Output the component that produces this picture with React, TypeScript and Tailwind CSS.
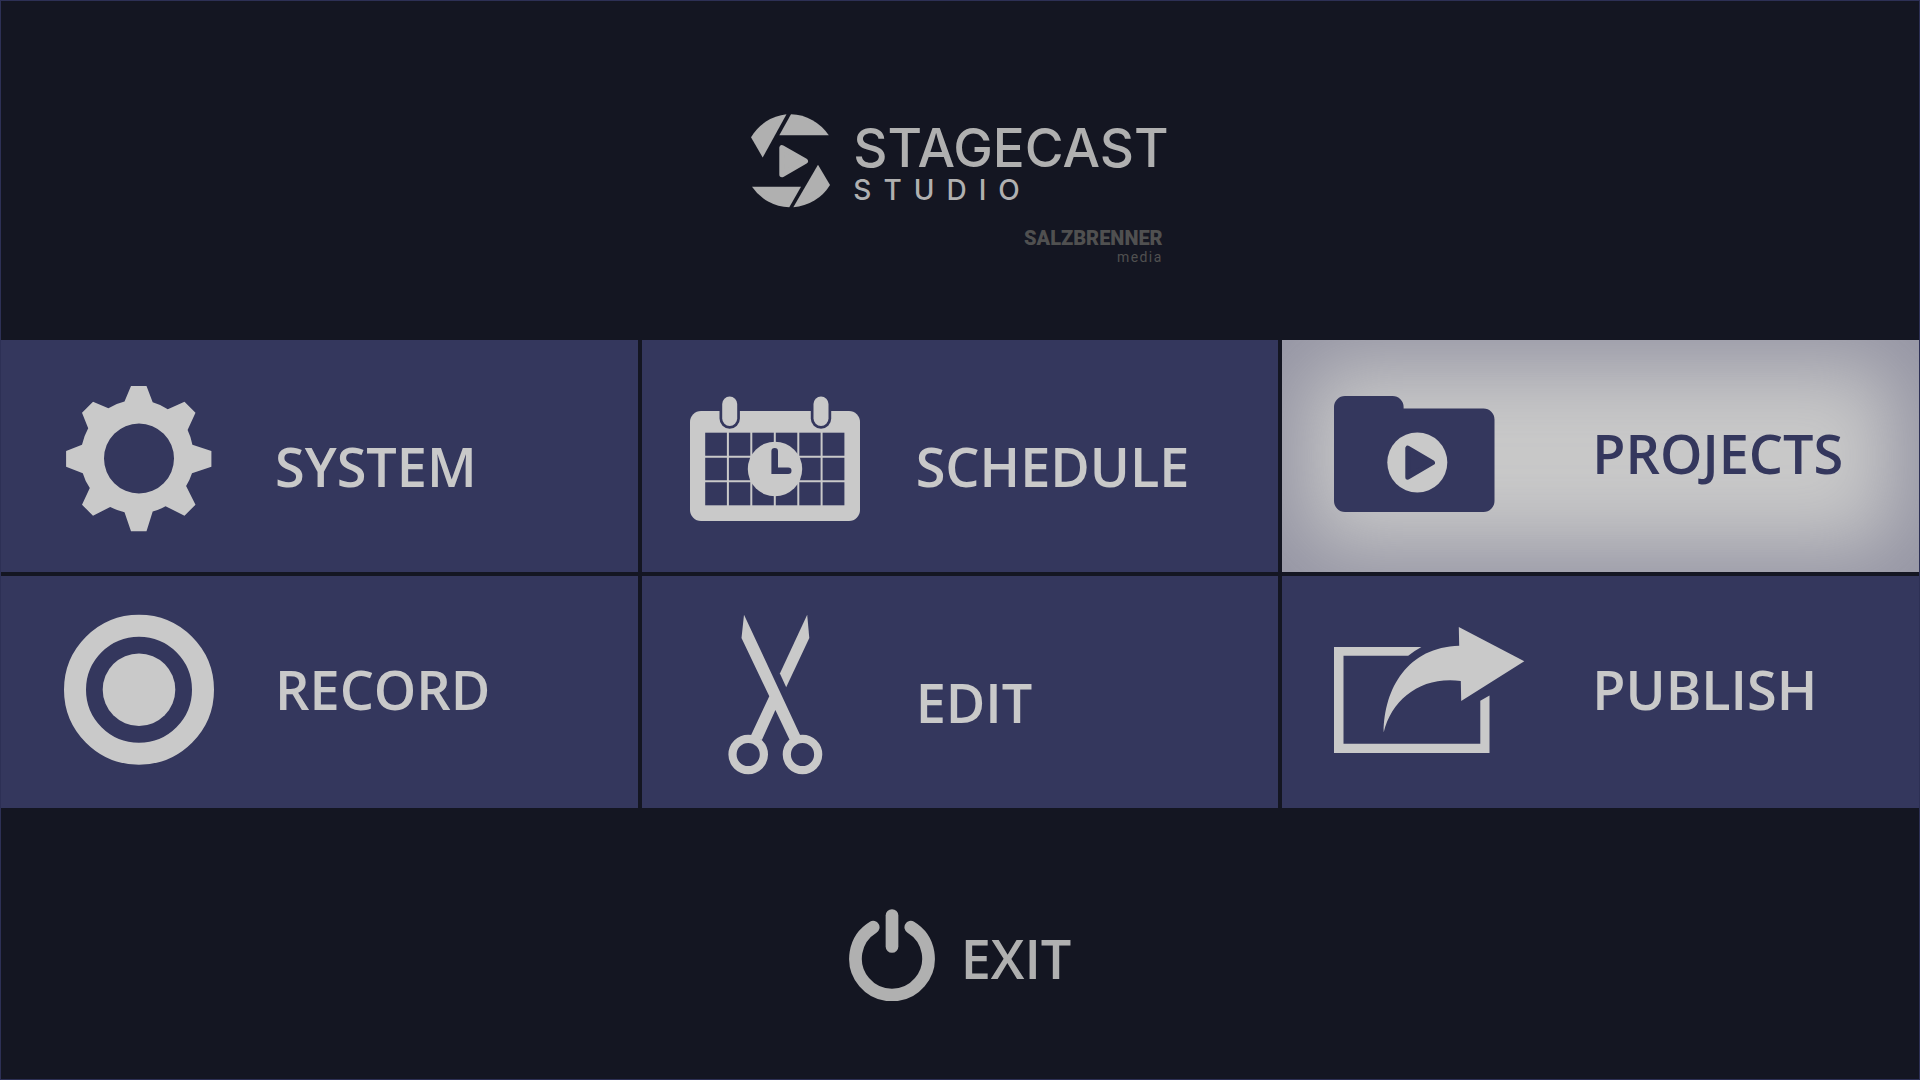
import type { ReactNode } from "react";

function StagecastLogo() {
  return (
    <svg viewBox="0 0 80 96" className="h-24 w-20 fill-current" aria-hidden="true">
      <path d="M35.5 1.3A46.7 46.7 0 0 0 0 24.3L11.7 44.5Z" />
      <path d="M40 1.3A46.7 46.7 0 0 1 77.8 22.3H28.3Z" />
      <path d="M1 73.7H50L38.3 94.3A46.7 46.7 0 0 1 1 73.7Z" />
      <path d="M67 51.7L79 72A46.7 46.7 0 0 1 42.3 94.3Z" />
      <path d="M31 34.8V61.6L54.3 48.2Z" stroke="currentColor" strokeWidth="5.4" strokeLinejoin="round" />
    </svg>
  );
}

function Icon({ children }: { children: ReactNode }) {
  return (
    <svg viewBox="0 0 200 176" className="h-44 w-50 shrink-0 fill-current" aria-hidden="true">
      {children}
    </svg>
  );
}

function GearIcon() {
  return (
    <Icon>
      <path
        fillRule="evenodd"
        d="M86 18H101.5L107.7 34.3Q115.5 36.5 122.8 41.3L139.5 33.7L150.5 44.7L142.6 62Q146 69 147.4 76.7L166.4 83V98.7L147 105.2Q145 111.5 141.1 118L150.5 136.7L139.5 147.7L120.5 138.2Q114 142 107.7 143.5L101.5 163.3H86L79.5 144.3Q72 142.5 65.2 139L48 147.7L37 136.7L44.8 120Q40 113 37.8 105.2L21.1 98.7V83L37 76.7Q39 68 43.2 60.3L37 44.7L48 33.7L63.4 40.2Q71 35.5 79.5 33.5ZM94 55.5A35 35 0 1 0 94 125.5A35 35 0 1 0 94 55.5Z"
      />
    </Icon>
  );
}

function CalendarIcon() {
  return (
    <Icon>
      <rect x="4" y="43" width="170" height="110" rx="11" />
      <g className="fill-[#34375d]">
        <path d="M33.5 40H53.9V50.5A10.2 10.2 0 0 1 33.5 50.5Z" />
        <path d="M124.8 40H145.2V50.5A10.2 10.2 0 0 1 124.8 50.5Z" />
        <rect x="19.2" y="64.7" width="139.2" height="72.6" />
      </g>
      <rect x="36.2" y="28.5" width="15" height="29.5" rx="7.5" />
      <rect x="127.5" y="28.5" width="15" height="29.5" rx="7.5" />
      <path
        d="M41.9 64V138M65.3 64V138M88.8 64V138M112.3 64V138M135.6 64V138M19 88.7H159M19 113.3H159"
        stroke="currentColor"
        strokeWidth="2"
      />
      <circle cx="89" cy="101" r="27.2" />
      <path
        d="M88.7 83.3V102.7H102.2"
        className="fill-none stroke-[#34375d]"
        strokeWidth="6.6"
        strokeLinecap="round"
      />
    </Icon>
  );
}

function FolderIcon() {
  return (
    <Icon>
      <path d="M19 28H66.6A11 11 0 0 1 77.6 39V40.5H157.5A11 11 0 0 1 168.5 51.5V133A11 11 0 0 1 157.5 144H19A11 11 0 0 1 8 133V39A11 11 0 0 1 19 28Z" />
      <circle cx="91.3" cy="94.5" r="30" className="fill-[#c9c9c9]" />
      <path d="M81.8 80.2V109.2L106.5 94.7Z" stroke="currentColor" strokeWidth="5" strokeLinejoin="round" />
    </Icon>
  );
}

function RecordIcon() {
  return (
    <Icon>
      <circle cx="94" cy="85.7" r="64" className="fill-none" stroke="currentColor" strokeWidth="22" />
      <circle cx="94" cy="85.7" r="36.3" />
    </Icon>
  );
}

function ScissorsIcon() {
  return (
    <Icon>
      <path d="M58 10.7L114.3 131.5L103.7 136L89.4 106L75.9 136L64.9 131.5L83.3 92.3L55.5 34Z" />
      <path d="M121.2 10.7L123.3 34L100.2 83.3L93.9 69.5Z" />
      <circle cx="62.2" cy="150.5" r="15.7" className="fill-none" stroke="currentColor" strokeWidth="8.2" />
      <circle cx="116.5" cy="150.5" r="15.7" className="fill-none" stroke="currentColor" strokeWidth="8.2" />
    </Icon>
  );
}

function ShareIcon() {
  return (
    <Icon>
      <path d="M8 43H95.4Q88 47 82.2 51.8H17.5V139.7H154.3V96.7L163.5 91.5V149H8Z" />
      <path d="M57.7 128.3C58 84 82 43 133.2 41.7L132.8 23L198.3 57.3L135.2 97L134.8 77C95 72 66 95 57.7 128.3Z" />
    </Icon>
  );
}

function PowerIcon() {
  return (
    <svg
      viewBox="0 0 86 92"
      className="h-[92px] w-[86px] fill-none stroke-current"
      strokeWidth="12.7"
      strokeLinecap="round"
      aria-hidden="true"
    >
      <path d="M24.2 18.2A36.5 36.5 0 1 0 61.8 18.2" />
      <path d="M43 6.5V37.5" />
    </svg>
  );
}

const tiles = [
  { label: "SYSTEM", icon: <GearIcon />, gap: "gap-[30px]", shift: "pt-5" },
  { label: "SCHEDULE", icon: <CalendarIcon />, gap: "gap-[30px]", shift: "pt-5" },
  { label: "PROJECTS", icon: <FolderIcon />, gap: "gap-[66px]", shift: "pb-1.5", active: true },
  { label: "RECORD", icon: <RecordIcon />, gap: "gap-[30px]", shift: "pb-1.5" },
  { label: "EDIT", icon: <ScissorsIcon />, gap: "gap-[30px]", shift: "pt-5" },
  { label: "PUBLISH", icon: <ShareIcon />, gap: "gap-[66px]", shift: "pb-1.5" },
];

export default function App() {
  return (
    <div className="flex min-h-screen flex-col border border-[#2d3055] bg-[#141622] font-['Open_Sans',sans-serif]">
      <header className="mx-auto flex flex-col pt-28 pb-[75px] text-[#b0b0b0]">
        <div className="flex items-end gap-[22px]">
          <StagecastLogo />
          <h1 className="flex flex-col gap-2.5 pb-[7px] font-['Inter',sans-serif] font-medium">
            <span className="text-[53px] leading-10">STAGECAST</span>
            <span className="text-[28px] leading-6 tracking-[12px]">STUDIO</span>
          </h1>
        </div>
        <p className="mt-[19px] flex flex-col items-end gap-px pr-1.5 font-['Roboto',sans-serif] text-[#505050]">
          <span className="text-xl leading-5 font-black">SALZBRENNER</span>
          <span className="text-sm leading-4 tracking-widest">media</span>
        </p>
      </header>

      <nav className="grid grid-cols-3 gap-1">
        {tiles.map((tile) => (
          <button
            key={tile.label}
            type="button"
            className={`flex h-58 items-center pl-11 ${tile.gap} ${
              tile.active
                ? "bg-[#c9c9c9] text-[#34375d] shadow-[inset_0_0_80px_26px_#9494a3]"
                : "bg-[#34375d] text-[#c9c9c9]"
            }`}
          >
            {tile.icon}
            <span className={`text-[54px] leading-16 font-semibold ${tile.shift}`}>{tile.label}</span>
          </button>
        ))}
      </nav>

      <footer className="flex justify-center pt-[101px] pb-16">
        <button type="button" className="flex items-center gap-[26px] text-[#b0b0b0]">
          <PowerIcon />
          <span className="pt-1.5 text-[54px] leading-16 font-semibold">EXIT</span>
        </button>
      </footer>
    </div>
  );
}
